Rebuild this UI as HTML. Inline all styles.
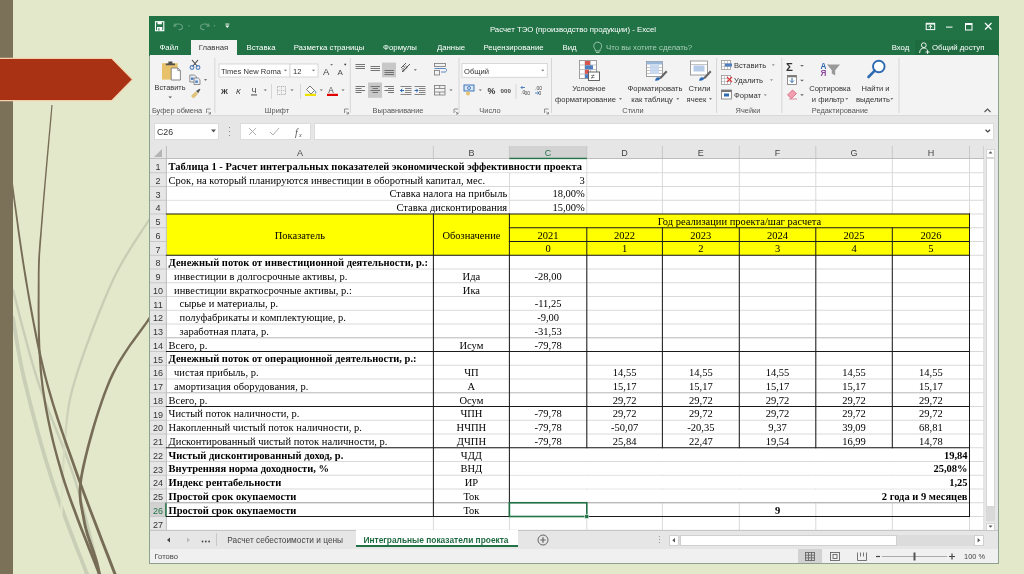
<!DOCTYPE html><html><head><meta charset="utf-8"><style>html,body{margin:0;padding:0;}body{width:1024px;height:574px;position:relative;overflow:hidden;background:#e3e8cb;}</style></head><body><div style="position:absolute;left:0;top:0;width:1024px;height:574px;will-change:transform"><svg style="position:absolute;left:0;top:0" width="1024" height="574"><defs><linearGradient id="fadeC" gradientUnits="userSpaceOnUse" x1="0" y1="220" x2="0" y2="520"><stop offset="0" stop-color="#c7cdb3"/><stop offset="0.6" stop-color="#c9cfb6"/><stop offset="1" stop-color="#e3e8cb"/></linearGradient></defs><g fill="none" stroke-linecap="round"><path d="M13.0 318.0 C14.9 328.3 17.9 353.0 24.4 380.0 C30.9 407.0 41.6 447.7 52.0 480.0 C62.4 512.3 79.8 555.7 87.0 574.0 C94.2 592.3 93.7 587.3 95.0 590.0" stroke="#c9ceb6" stroke-width="3.8"/><path d="M13.0 290.0 C17.1 305.0 27.2 348.3 37.5 380.0 C47.8 411.7 64.6 447.7 75.0 480.0 C85.4 512.3 95.8 558.3 100.0 574.0" stroke="#c8cdb5" stroke-width="2.4"/><path d="M160.0 205.0 C158.2 207.5 156.8 207.5 149.0 220.0 C141.2 232.5 125.3 253.3 113.0 280.0 C100.7 306.7 83.0 353.3 75.0 380.0 C67.0 406.7 67.3 416.7 65.0 440.0 C62.7 463.3 61.7 506.7 61.0 520.0" stroke="url(#fadeC)" stroke-width="2.3"/></g><polygon points="51.4,104.9 50.9,110.7 50.2,118.1 49.4,126.9 48.5,136.8 47.5,147.5 46.5,158.7 45.5,170.1 44.5,181.4 43.5,192.4 42.7,202.6 41.9,211.9 41.2,219.9 40.7,226.7 40.2,232.7 39.7,237.9 39.3,242.5 39.0,246.8 38.7,250.9 38.4,254.9 38.2,259.0 38.0,263.4 37.9,268.3 37.8,273.8 37.8,280.0 37.7,286.9 37.7,294.4 37.6,302.3 37.6,310.6 37.7,319.1 37.8,327.9 37.9,336.8 38.2,345.7 38.6,354.5 39.2,363.3 39.8,371.9 40.7,380.1 41.7,388.2 42.9,396.1 44.1,404.0 45.5,411.8 47.0,419.5 48.6,427.3 50.3,435.0 52.2,442.7 54.2,450.5 56.3,458.4 58.5,466.3 60.8,474.4 63.4,482.8 66.4,491.8 69.7,501.2 73.2,510.8 76.8,520.4 80.4,529.9 84.0,539.1 87.4,547.8 90.6,555.8 93.5,563.1 96.0,569.4 98.0,574.5 99.4,578.4 100.5,581.3 101.3,583.2 101.8,584.4 102.2,585.1 105.0,584.3 104.9,583.6 104.8,583.0 104.6,582.3 104.5,581.8 104.5,582.0 101.7,583.0 104.3,581.0 101.3,581.8 101.5,582.6 101.6,583.1 101.8,583.7 101.9,584.2 102.0,584.2 104.7,583.4 104.5,583.2 104.0,582.1 103.3,580.2 102.1,577.4 100.6,573.5 98.6,568.4 96.1,562.1 93.2,554.8 90.0,546.8 86.5,538.1 82.9,528.9 79.3,519.4 75.7,509.8 72.1,500.3 68.8,491.0 65.8,482.0 63.2,473.6 60.9,465.6 58.6,457.7 56.5,449.9 54.5,442.2 52.7,434.4 50.9,426.7 49.3,419.1 47.8,411.3 46.4,403.6 45.1,395.8 43.9,387.9 42.9,379.9 42.0,371.6 41.3,363.1 40.7,354.4 40.3,345.6 40.0,336.7 39.8,327.9 39.7,319.1 39.6,310.6 39.6,302.3 39.6,294.4 39.6,287.0 39.6,280.0 39.6,273.8 39.7,268.3 39.8,263.5 40.0,259.1 40.1,255.0 40.4,251.0 40.7,246.9 41.0,242.7 41.4,238.0 41.8,232.8 42.2,226.9 42.8,220.1 43.4,212.0 44.1,202.7 45.0,192.5 45.9,181.5 46.9,170.2 47.9,158.8 48.9,147.6 49.8,136.9 50.7,127.0 51.5,118.2 52.1,110.8 52.6,105.1" fill="#776c55"/><polygon points="10.2,175.1 10.9,180.2 11.7,186.6 12.7,194.1 13.8,202.5 15.1,211.7 16.4,221.4 17.7,231.4 19.1,241.6 20.6,251.8 22.1,261.7 23.6,271.2 25.0,280.2 26.5,288.7 27.9,297.2 29.4,305.7 30.9,314.1 32.5,322.5 34.1,330.9 35.7,339.2 37.4,347.5 39.2,355.8 41.1,364.0 43.0,372.2 45.1,380.3 47.2,388.3 49.5,396.3 51.8,404.1 54.3,411.9 56.7,419.7 59.3,427.4 61.9,435.1 64.6,442.9 67.3,450.7 70.1,458.5 72.9,466.4 75.7,474.5 78.8,482.9 82.0,491.9 85.5,501.3 89.1,510.9 92.8,520.5 96.4,530.0 99.9,539.2 103.3,547.9 106.4,556.0 109.2,563.2 111.6,569.5 113.6,574.6 115.1,578.4 116.1,581.1 116.8,582.9 117.3,583.9 118.3,585.0 120.5,583.0 120.3,582.3 120.1,581.5 119.9,580.7 119.7,580.0 119.6,579.7 118.5,581.6 117.5,578.4 116.3,580.3 116.5,580.9 116.7,581.6 116.9,582.4 117.2,583.1 117.3,583.5 119.4,582.0 120.1,582.5 119.7,581.6 119.0,579.9 117.9,577.2 116.4,573.4 114.4,568.4 112.0,562.2 109.2,554.9 106.0,546.9 102.6,538.2 99.1,529.0 95.4,519.5 91.7,509.9 88.1,500.3 84.6,490.9 81.3,482.0 78.3,473.5 75.4,465.5 72.6,457.6 69.8,449.8 67.0,442.0 64.3,434.3 61.7,426.6 59.1,418.9 56.6,411.2 54.1,403.4 51.8,395.6 49.5,387.7 47.3,379.7 45.2,371.6 43.3,363.5 41.4,355.3 39.6,347.1 37.8,338.8 36.2,330.5 34.5,322.1 33.0,313.7 31.4,305.3 29.9,296.9 28.4,288.4 27.0,279.8 25.5,270.9 24.0,261.4 22.5,251.5 21.0,241.4 19.5,231.2 18.1,221.1 16.8,211.4 15.5,202.3 14.4,193.9 13.4,186.4 12.5,180.0 11.8,174.9" fill="#776c55"/><polygon points="169.1,289.3 168.2,290.6 167.0,292.1 165.8,293.8 164.3,295.7 162.7,297.7 161.0,300.0 159.2,302.5 157.2,305.2 155.1,308.1 152.8,311.3 150.5,314.7 148.0,318.3 145.4,322.2 142.4,326.2 139.3,330.5 136.0,335.0 132.5,339.8 128.9,344.7 125.4,349.9 121.8,355.4 118.3,361.0 115.0,367.0 111.8,373.1 108.8,379.5 106.0,386.4 103.1,393.9 100.3,401.9 97.5,410.3 94.7,418.9 92.1,427.6 89.6,436.2 87.3,444.7 85.3,452.8 83.4,460.4 81.8,467.5 80.6,473.8 79.6,479.3 79.0,484.4 78.7,489.0 78.6,493.1 78.8,497.0 79.1,500.5 79.5,503.9 80.1,507.1 80.7,510.3 81.3,513.5 82.0,516.8 82.6,520.3 83.3,523.9 84.1,527.6 85.1,531.2 86.1,534.9 87.3,538.5 88.4,542.0 89.6,545.4 90.7,548.7 91.8,551.9 92.9,554.9 93.8,557.8 94.5,560.4 95.2,562.9 95.8,565.3 96.4,567.6 96.9,569.8 97.3,571.9 97.7,573.8 98.1,575.6 98.4,577.3 98.7,578.8 99.0,580.1 99.2,581.3 99.4,582.3 102.6,581.7 102.3,580.7 102.1,579.5 101.8,578.2 101.5,576.7 101.2,575.0 100.8,573.2 100.3,571.2 99.9,569.1 99.4,566.9 98.8,564.6 98.2,562.1 97.5,559.6 96.7,556.9 95.7,554.0 94.7,550.9 93.6,547.7 92.4,544.4 91.2,541.0 90.0,537.5 88.9,534.0 87.9,530.5 86.9,526.9 86.1,523.3 85.4,519.7 84.8,516.3 84.1,513.0 83.5,509.8 82.8,506.6 82.3,503.5 81.8,500.2 81.5,496.8 81.4,493.1 81.4,489.1 81.7,484.6 82.3,479.7 83.2,474.2 84.5,468.0 86.0,461.0 87.8,453.4 89.9,445.3 92.2,436.9 94.6,428.3 97.2,419.6 99.9,411.1 102.7,402.7 105.5,394.8 108.4,387.3 111.2,380.5 114.1,374.2 117.2,368.1 120.5,362.3 123.9,356.7 127.4,351.3 130.9,346.1 134.5,341.2 137.9,336.5 141.2,331.9 144.4,327.6 147.3,323.5 150.0,319.7 152.4,316.0 154.7,312.6 157.0,309.5 159.0,306.6 161.0,303.9 162.9,301.4 164.6,299.1 166.1,297.0 167.5,295.1 168.8,293.5 169.9,292.0 170.9,290.7" fill="#776c55"/></svg><div style="position:absolute;left:0px;top:0px;width:13px;height:574px;background:#7b7058;"></div><svg style="position:absolute;left:0;top:0" width="140" height="110"><polygon points="-2,58.4 111.7,58.4 132.5,79.5 111.7,100.6 -2,100.6" fill="#a83213" stroke="#f2d0ab" stroke-width="1.1"/></svg><div style="position:absolute;left:149px;top:16px;width:850px;height:548px;background:#fff;border:1px solid #8ca28f;box-sizing:border-box;"></div><div style="position:absolute;left:149px;top:16px;width:850px;height:40px;background:#217346;"></div><div style="position:absolute;left:150px;top:55px;width:848px;height:508px;background:#e6e6e6;"></div><div style="position:absolute;left:150px;top:55px;width:848px;height:60px;background:#f3f3f3;border-bottom:1px solid #dadada;"></div><div style="position:absolute;left:191px;top:40px;width:46px;height:16px;background:#f3f3f3;"></div><div style="position:absolute;left:73px;width:1000px;text-align:center;top:24.94px;font-family:'Liberation Sans', sans-serif;font-size:7.8px;font-weight:normal;color:#fff;white-space:pre;line-height:normal;">Расчет ТЭО (производство продукции) - Excel</div><div style="position:absolute;left:-331px;width:1000px;text-align:center;top:43.44px;font-family:'Liberation Sans', sans-serif;font-size:7.8px;font-weight:normal;color:#fff;white-space:pre;line-height:normal;">Файл</div><div style="position:absolute;left:-286.5px;width:1000px;text-align:center;top:43.44px;font-family:'Liberation Sans', sans-serif;font-size:7.8px;font-weight:normal;color:#3a3a3a;white-space:pre;line-height:normal;">Главная</div><div style="position:absolute;left:-239px;width:1000px;text-align:center;top:43.44px;font-family:'Liberation Sans', sans-serif;font-size:7.8px;font-weight:normal;color:#fff;white-space:pre;line-height:normal;">Вставка</div><div style="position:absolute;left:-171px;width:1000px;text-align:center;top:43.44px;font-family:'Liberation Sans', sans-serif;font-size:7.8px;font-weight:normal;color:#fff;white-space:pre;line-height:normal;">Разметка страницы</div><div style="position:absolute;left:-100px;width:1000px;text-align:center;top:43.44px;font-family:'Liberation Sans', sans-serif;font-size:7.8px;font-weight:normal;color:#fff;white-space:pre;line-height:normal;">Формулы</div><div style="position:absolute;left:-49px;width:1000px;text-align:center;top:43.44px;font-family:'Liberation Sans', sans-serif;font-size:7.8px;font-weight:normal;color:#fff;white-space:pre;line-height:normal;">Данные</div><div style="position:absolute;left:13.5px;width:1000px;text-align:center;top:43.44px;font-family:'Liberation Sans', sans-serif;font-size:7.8px;font-weight:normal;color:#fff;white-space:pre;line-height:normal;">Рецензирование</div><div style="position:absolute;left:69.5px;width:1000px;text-align:center;top:43.44px;font-family:'Liberation Sans', sans-serif;font-size:7.8px;font-weight:normal;color:#fff;white-space:pre;line-height:normal;">Вид</div><div style="position:absolute;left:606px;top:43.44px;font-family:'Liberation Sans', sans-serif;font-size:7.8px;font-weight:normal;color:#a9d0b8;white-space:pre;line-height:normal;">Что вы хотите сделать?</div><svg style="position:absolute;left:592px;top:41px" width="12" height="14"><path d="M3.3 8.5 C1.8 7 1.8 5.5 1.8 4.8 C1.8 2.6 3.6 1.2 5.7 1.2 C7.8 1.2 9.6 2.6 9.6 4.8 C9.6 5.5 9.6 7 8.1 8.5 V10 H3.3 Z M4 11.5 H7.4" fill="none" stroke="#a9d0b8" stroke-width="0.9"/></svg><div style="position:absolute;left:400.5px;width:1000px;text-align:center;top:43.44px;font-family:'Liberation Sans', sans-serif;font-size:7.8px;font-weight:normal;color:#fff;white-space:pre;line-height:normal;">Вход</div><div style="position:absolute;left:915px;top:40px;width:83px;height:15px;background:#1e6b40;"></div><div style="position:absolute;left:932px;top:43.44px;font-family:'Liberation Sans', sans-serif;font-size:7.8px;font-weight:normal;color:#fff;white-space:pre;line-height:normal;">Общий доступ</div><div style="position:absolute;left:150px;top:116px;width:848px;height:30px;background:#e6e6e6;"></div><div style="position:absolute;left:153.5px;top:123px;width:65.5px;height:16.5px;background:#fff;border:1px solid #dcdcdc;box-sizing:border-box;"></div><div style="position:absolute;left:157px;top:127.04px;font-family:'Liberation Sans', sans-serif;font-size:8.8px;font-weight:normal;color:#333;white-space:pre;line-height:normal;">C26</div><svg style="position:absolute;left:210px;top:128px" width="8" height="6"><polygon points="1,1.5 6,1.5 3.5,4.5" fill="#555"/></svg><div style="position:absolute;left:228.5px;top:127px;width:1.2px;height:1.2px;background:#888;"></div><div style="position:absolute;left:228.5px;top:131px;width:1.2px;height:1.2px;background:#888;"></div><div style="position:absolute;left:228.5px;top:135px;width:1.2px;height:1.2px;background:#888;"></div><div style="position:absolute;left:239.5px;top:123px;width:71.5px;height:16.5px;background:#fff;border:1px solid #dcdcdc;box-sizing:border-box;"></div><svg style="position:absolute;left:239px;top:123px" width="72" height="17"><g stroke="#b0b0b0" stroke-width="1" fill="none"><path d="M10 5 L17 12 M17 5 L10 12"/><path d="M31 9 L34 12 L40 5"/></g><text x="56" y="13" font-family="Liberation Serif" font-style="italic" font-size="10" fill="#555">f</text><text x="60" y="13.5" font-family="Liberation Serif" font-style="italic" font-size="6" fill="#555">x</text></svg><div style="position:absolute;left:313.5px;top:123px;width:680px;height:16.5px;background:#fff;border:1px solid #dcdcdc;box-sizing:border-box;"></div><svg style="position:absolute;left:983px;top:127px" width="10" height="8"><path d="M2.5 2.8 L4.8 5 L7.1 2.8" stroke="#444" stroke-width="1.2" fill="none"/></svg><div style="position:absolute;left:150px;top:146px;width:833.8px;height:384.25px;background:#fff;"></div><div style="position:absolute;left:150px;top:146px;width:833.8px;height:13px;background:#e6e6e6;"></div><div style="position:absolute;left:150px;top:146px;width:16.400000000000006px;height:384.25px;background:#e6e6e6;"></div><div style="position:absolute;left:509.4px;top:146px;width:77.39999999999998px;height:13px;background:#d2d2d2;"></div><div style="position:absolute;left:150px;top:502.75px;width:16.400000000000006px;height:13.75px;background:#d2d2d2;"></div><svg style="position:absolute;left:0;top:0" width="1024" height="574"><line x1="166.40" y1="172.75" x2="983.80" y2="172.75" stroke="#d9d9d9" stroke-width="1"/><line x1="166.40" y1="186.50" x2="983.80" y2="186.50" stroke="#d9d9d9" stroke-width="1"/><line x1="166.40" y1="200.25" x2="983.80" y2="200.25" stroke="#d9d9d9" stroke-width="1"/><line x1="166.40" y1="214.00" x2="983.80" y2="214.00" stroke="#d9d9d9" stroke-width="1"/><line x1="166.40" y1="227.75" x2="983.80" y2="227.75" stroke="#d9d9d9" stroke-width="1"/><line x1="166.40" y1="241.50" x2="983.80" y2="241.50" stroke="#d9d9d9" stroke-width="1"/><line x1="166.40" y1="255.25" x2="983.80" y2="255.25" stroke="#d9d9d9" stroke-width="1"/><line x1="166.40" y1="269.00" x2="983.80" y2="269.00" stroke="#d9d9d9" stroke-width="1"/><line x1="166.40" y1="282.75" x2="983.80" y2="282.75" stroke="#d9d9d9" stroke-width="1"/><line x1="166.40" y1="296.50" x2="983.80" y2="296.50" stroke="#d9d9d9" stroke-width="1"/><line x1="166.40" y1="310.25" x2="983.80" y2="310.25" stroke="#d9d9d9" stroke-width="1"/><line x1="166.40" y1="324.00" x2="983.80" y2="324.00" stroke="#d9d9d9" stroke-width="1"/><line x1="166.40" y1="337.75" x2="983.80" y2="337.75" stroke="#d9d9d9" stroke-width="1"/><line x1="166.40" y1="351.50" x2="983.80" y2="351.50" stroke="#d9d9d9" stroke-width="1"/><line x1="166.40" y1="365.25" x2="983.80" y2="365.25" stroke="#d9d9d9" stroke-width="1"/><line x1="166.40" y1="379.00" x2="983.80" y2="379.00" stroke="#d9d9d9" stroke-width="1"/><line x1="166.40" y1="392.75" x2="983.80" y2="392.75" stroke="#d9d9d9" stroke-width="1"/><line x1="166.40" y1="406.50" x2="983.80" y2="406.50" stroke="#d9d9d9" stroke-width="1"/><line x1="166.40" y1="420.25" x2="983.80" y2="420.25" stroke="#d9d9d9" stroke-width="1"/><line x1="166.40" y1="434.00" x2="983.80" y2="434.00" stroke="#d9d9d9" stroke-width="1"/><line x1="166.40" y1="447.75" x2="983.80" y2="447.75" stroke="#d9d9d9" stroke-width="1"/><line x1="166.40" y1="461.50" x2="983.80" y2="461.50" stroke="#d9d9d9" stroke-width="1"/><line x1="166.40" y1="475.25" x2="983.80" y2="475.25" stroke="#d9d9d9" stroke-width="1"/><line x1="166.40" y1="489.00" x2="983.80" y2="489.00" stroke="#d9d9d9" stroke-width="1"/><line x1="166.40" y1="502.75" x2="983.80" y2="502.75" stroke="#d9d9d9" stroke-width="1"/><line x1="166.40" y1="516.50" x2="983.80" y2="516.50" stroke="#d9d9d9" stroke-width="1"/><line x1="166.40" y1="530.25" x2="983.80" y2="530.25" stroke="#d9d9d9" stroke-width="1"/><line x1="433.40" y1="159.00" x2="433.40" y2="530.25" stroke="#d9d9d9" stroke-width="1"/><line x1="509.40" y1="159.00" x2="509.40" y2="530.25" stroke="#d9d9d9" stroke-width="1"/><line x1="586.80" y1="159.00" x2="586.80" y2="530.25" stroke="#d9d9d9" stroke-width="1"/><line x1="662.40" y1="159.00" x2="662.40" y2="530.25" stroke="#d9d9d9" stroke-width="1"/><line x1="739.30" y1="159.00" x2="739.30" y2="530.25" stroke="#d9d9d9" stroke-width="1"/><line x1="815.80" y1="159.00" x2="815.80" y2="530.25" stroke="#d9d9d9" stroke-width="1"/><line x1="892.30" y1="159.00" x2="892.30" y2="530.25" stroke="#d9d9d9" stroke-width="1"/><line x1="969.50" y1="159.00" x2="969.50" y2="530.25" stroke="#d9d9d9" stroke-width="1"/><line x1="983.80" y1="159.00" x2="983.80" y2="530.25" stroke="#d9d9d9" stroke-width="1"/><line x1="433.40" y1="146.00" x2="433.40" y2="159.00" stroke="#c8c8c8" stroke-width="1"/><line x1="509.40" y1="146.00" x2="509.40" y2="159.00" stroke="#c8c8c8" stroke-width="1"/><line x1="586.80" y1="146.00" x2="586.80" y2="159.00" stroke="#c8c8c8" stroke-width="1"/><line x1="662.40" y1="146.00" x2="662.40" y2="159.00" stroke="#c8c8c8" stroke-width="1"/><line x1="739.30" y1="146.00" x2="739.30" y2="159.00" stroke="#c8c8c8" stroke-width="1"/><line x1="815.80" y1="146.00" x2="815.80" y2="159.00" stroke="#c8c8c8" stroke-width="1"/><line x1="892.30" y1="146.00" x2="892.30" y2="159.00" stroke="#c8c8c8" stroke-width="1"/><line x1="969.50" y1="146.00" x2="969.50" y2="159.00" stroke="#c8c8c8" stroke-width="1"/><line x1="983.80" y1="146.00" x2="983.80" y2="159.00" stroke="#c8c8c8" stroke-width="1"/><line x1="150.00" y1="172.75" x2="166.40" y2="172.75" stroke="#c8c8c8" stroke-width="1"/><line x1="150.00" y1="186.50" x2="166.40" y2="186.50" stroke="#c8c8c8" stroke-width="1"/><line x1="150.00" y1="200.25" x2="166.40" y2="200.25" stroke="#c8c8c8" stroke-width="1"/><line x1="150.00" y1="214.00" x2="166.40" y2="214.00" stroke="#c8c8c8" stroke-width="1"/><line x1="150.00" y1="227.75" x2="166.40" y2="227.75" stroke="#c8c8c8" stroke-width="1"/><line x1="150.00" y1="241.50" x2="166.40" y2="241.50" stroke="#c8c8c8" stroke-width="1"/><line x1="150.00" y1="255.25" x2="166.40" y2="255.25" stroke="#c8c8c8" stroke-width="1"/><line x1="150.00" y1="269.00" x2="166.40" y2="269.00" stroke="#c8c8c8" stroke-width="1"/><line x1="150.00" y1="282.75" x2="166.40" y2="282.75" stroke="#c8c8c8" stroke-width="1"/><line x1="150.00" y1="296.50" x2="166.40" y2="296.50" stroke="#c8c8c8" stroke-width="1"/><line x1="150.00" y1="310.25" x2="166.40" y2="310.25" stroke="#c8c8c8" stroke-width="1"/><line x1="150.00" y1="324.00" x2="166.40" y2="324.00" stroke="#c8c8c8" stroke-width="1"/><line x1="150.00" y1="337.75" x2="166.40" y2="337.75" stroke="#c8c8c8" stroke-width="1"/><line x1="150.00" y1="351.50" x2="166.40" y2="351.50" stroke="#c8c8c8" stroke-width="1"/><line x1="150.00" y1="365.25" x2="166.40" y2="365.25" stroke="#c8c8c8" stroke-width="1"/><line x1="150.00" y1="379.00" x2="166.40" y2="379.00" stroke="#c8c8c8" stroke-width="1"/><line x1="150.00" y1="392.75" x2="166.40" y2="392.75" stroke="#c8c8c8" stroke-width="1"/><line x1="150.00" y1="406.50" x2="166.40" y2="406.50" stroke="#c8c8c8" stroke-width="1"/><line x1="150.00" y1="420.25" x2="166.40" y2="420.25" stroke="#c8c8c8" stroke-width="1"/><line x1="150.00" y1="434.00" x2="166.40" y2="434.00" stroke="#c8c8c8" stroke-width="1"/><line x1="150.00" y1="447.75" x2="166.40" y2="447.75" stroke="#c8c8c8" stroke-width="1"/><line x1="150.00" y1="461.50" x2="166.40" y2="461.50" stroke="#c8c8c8" stroke-width="1"/><line x1="150.00" y1="475.25" x2="166.40" y2="475.25" stroke="#c8c8c8" stroke-width="1"/><line x1="150.00" y1="489.00" x2="166.40" y2="489.00" stroke="#c8c8c8" stroke-width="1"/><line x1="150.00" y1="502.75" x2="166.40" y2="502.75" stroke="#c8c8c8" stroke-width="1"/><line x1="150.00" y1="516.50" x2="166.40" y2="516.50" stroke="#c8c8c8" stroke-width="1"/><line x1="150.00" y1="530.25" x2="166.40" y2="530.25" stroke="#c8c8c8" stroke-width="1"/><line x1="150.00" y1="158.50" x2="983.80" y2="158.50" stroke="#bdbdbd" stroke-width="1"/><line x1="166.40" y1="146.00" x2="166.40" y2="530.25" stroke="#bdbdbd" stroke-width="1"/><line x1="509.40" y1="158.50" x2="586.80" y2="158.50" stroke="#217346" stroke-width="1.5"/><line x1="165.90" y1="502.75" x2="165.90" y2="516.50" stroke="#217346" stroke-width="1.5"/><rect x="167.00" y="159.60" width="419.20" height="12.55" fill="#fff"/><rect x="167.00" y="173.35" width="341.80" height="12.55" fill="#fff"/><rect x="167.00" y="187.10" width="341.80" height="12.55" fill="#fff"/><rect x="167.00" y="200.85" width="341.80" height="12.55" fill="#fff"/><rect x="166.90" y="214.00" width="802.10" height="41.25" fill="#ffff00"/><rect x="510.00" y="448.35" width="458.90" height="12.55" fill="#fff"/><rect x="510.00" y="462.10" width="458.90" height="12.55" fill="#fff"/><rect x="510.00" y="475.85" width="458.90" height="12.55" fill="#fff"/><rect x="510.00" y="489.60" width="458.90" height="12.55" fill="#fff"/><line x1="165.90" y1="214.00" x2="970.00" y2="214.00" stroke="#1a1a1a" stroke-width="1"/><line x1="508.90" y1="227.75" x2="970.00" y2="227.75" stroke="#1a1a1a" stroke-width="1"/><line x1="508.90" y1="241.50" x2="970.00" y2="241.50" stroke="#1a1a1a" stroke-width="1"/><line x1="165.90" y1="255.25" x2="970.00" y2="255.25" stroke="#1a1a1a" stroke-width="1"/><line x1="165.90" y1="337.75" x2="970.00" y2="337.75" stroke="#c4c4c4" stroke-width="1"/><line x1="165.90" y1="351.50" x2="970.00" y2="351.50" stroke="#1a1a1a" stroke-width="1"/><line x1="165.90" y1="392.75" x2="970.00" y2="392.75" stroke="#c4c4c4" stroke-width="1"/><line x1="165.90" y1="406.50" x2="970.00" y2="406.50" stroke="#1a1a1a" stroke-width="1"/><line x1="165.90" y1="447.75" x2="970.00" y2="447.75" stroke="#1a1a1a" stroke-width="1"/><line x1="165.90" y1="502.75" x2="970.00" y2="502.75" stroke="#aaaaaa" stroke-width="1"/><line x1="165.90" y1="516.50" x2="970.00" y2="516.50" stroke="#1a1a1a" stroke-width="1"/><line x1="433.40" y1="213.50" x2="433.40" y2="517.00" stroke="#1a1a1a" stroke-width="1"/><line x1="509.40" y1="213.50" x2="509.40" y2="517.00" stroke="#1a1a1a" stroke-width="1"/><line x1="969.50" y1="213.50" x2="969.50" y2="517.00" stroke="#1a1a1a" stroke-width="1"/><line x1="586.80" y1="227.25" x2="586.80" y2="448.25" stroke="#1a1a1a" stroke-width="1"/><line x1="662.40" y1="227.25" x2="662.40" y2="448.25" stroke="#1a1a1a" stroke-width="1"/><line x1="739.30" y1="227.25" x2="739.30" y2="448.25" stroke="#1a1a1a" stroke-width="1"/><line x1="815.80" y1="227.25" x2="815.80" y2="448.25" stroke="#1a1a1a" stroke-width="1"/><line x1="892.30" y1="227.25" x2="892.30" y2="448.25" stroke="#1a1a1a" stroke-width="1"/><rect x="509.40" y="502.75" width="77.40" height="13.75" fill="none" stroke="#217346" stroke-width="1.6"/><rect x="584.80" y="514.50" width="4" height="4" fill="#217346" stroke="#fff" stroke-width="0.6"/></svg><div style="position:absolute;left:-200.10000000000002px;width:1000px;text-align:center;top:148.16px;font-family:'Liberation Sans', sans-serif;font-size:9px;font-weight:normal;color:#444;white-space:pre;line-height:normal;">A</div><div style="position:absolute;left:-28.600000000000023px;width:1000px;text-align:center;top:148.16px;font-family:'Liberation Sans', sans-serif;font-size:9px;font-weight:normal;color:#444;white-space:pre;line-height:normal;">B</div><div style="position:absolute;left:48.09999999999991px;width:1000px;text-align:center;top:148.16px;font-family:'Liberation Sans', sans-serif;font-size:9px;font-weight:normal;color:#217346;white-space:pre;line-height:normal;">C</div><div style="position:absolute;left:124.59999999999991px;width:1000px;text-align:center;top:148.16px;font-family:'Liberation Sans', sans-serif;font-size:9px;font-weight:normal;color:#444;white-space:pre;line-height:normal;">D</div><div style="position:absolute;left:200.8499999999999px;width:1000px;text-align:center;top:148.16px;font-family:'Liberation Sans', sans-serif;font-size:9px;font-weight:normal;color:#444;white-space:pre;line-height:normal;">E</div><div style="position:absolute;left:277.54999999999995px;width:1000px;text-align:center;top:148.16px;font-family:'Liberation Sans', sans-serif;font-size:9px;font-weight:normal;color:#444;white-space:pre;line-height:normal;">F</div><div style="position:absolute;left:354.04999999999995px;width:1000px;text-align:center;top:148.16px;font-family:'Liberation Sans', sans-serif;font-size:9px;font-weight:normal;color:#444;white-space:pre;line-height:normal;">G</div><div style="position:absolute;left:430.9px;width:1000px;text-align:center;top:148.16px;font-family:'Liberation Sans', sans-serif;font-size:9px;font-weight:normal;color:#444;white-space:pre;line-height:normal;">H</div><svg style="position:absolute;left:150px;top:146px" width="16" height="13"><polygon points="12,3 12,11 4,11" fill="#b4b4b4"/></svg><div style="position:absolute;left:-342.0px;width:1000px;text-align:center;top:162.16px;font-family:'Liberation Sans', sans-serif;font-size:9px;font-weight:normal;color:#333;white-space:pre;line-height:normal;">1</div><div style="position:absolute;left:-342.0px;width:1000px;text-align:center;top:175.91px;font-family:'Liberation Sans', sans-serif;font-size:9px;font-weight:normal;color:#333;white-space:pre;line-height:normal;">2</div><div style="position:absolute;left:-342.0px;width:1000px;text-align:center;top:189.66px;font-family:'Liberation Sans', sans-serif;font-size:9px;font-weight:normal;color:#333;white-space:pre;line-height:normal;">3</div><div style="position:absolute;left:-342.0px;width:1000px;text-align:center;top:203.41px;font-family:'Liberation Sans', sans-serif;font-size:9px;font-weight:normal;color:#333;white-space:pre;line-height:normal;">4</div><div style="position:absolute;left:-342.0px;width:1000px;text-align:center;top:217.16px;font-family:'Liberation Sans', sans-serif;font-size:9px;font-weight:normal;color:#333;white-space:pre;line-height:normal;">5</div><div style="position:absolute;left:-342.0px;width:1000px;text-align:center;top:230.91px;font-family:'Liberation Sans', sans-serif;font-size:9px;font-weight:normal;color:#333;white-space:pre;line-height:normal;">6</div><div style="position:absolute;left:-342.0px;width:1000px;text-align:center;top:244.66px;font-family:'Liberation Sans', sans-serif;font-size:9px;font-weight:normal;color:#333;white-space:pre;line-height:normal;">7</div><div style="position:absolute;left:-342.0px;width:1000px;text-align:center;top:258.41px;font-family:'Liberation Sans', sans-serif;font-size:9px;font-weight:normal;color:#333;white-space:pre;line-height:normal;">8</div><div style="position:absolute;left:-342.0px;width:1000px;text-align:center;top:272.16px;font-family:'Liberation Sans', sans-serif;font-size:9px;font-weight:normal;color:#333;white-space:pre;line-height:normal;">9</div><div style="position:absolute;left:-342.0px;width:1000px;text-align:center;top:285.91px;font-family:'Liberation Sans', sans-serif;font-size:9px;font-weight:normal;color:#333;white-space:pre;line-height:normal;">10</div><div style="position:absolute;left:-342.0px;width:1000px;text-align:center;top:299.66px;font-family:'Liberation Sans', sans-serif;font-size:9px;font-weight:normal;color:#333;white-space:pre;line-height:normal;">11</div><div style="position:absolute;left:-342.0px;width:1000px;text-align:center;top:313.41px;font-family:'Liberation Sans', sans-serif;font-size:9px;font-weight:normal;color:#333;white-space:pre;line-height:normal;">12</div><div style="position:absolute;left:-342.0px;width:1000px;text-align:center;top:327.16px;font-family:'Liberation Sans', sans-serif;font-size:9px;font-weight:normal;color:#333;white-space:pre;line-height:normal;">13</div><div style="position:absolute;left:-342.0px;width:1000px;text-align:center;top:340.91px;font-family:'Liberation Sans', sans-serif;font-size:9px;font-weight:normal;color:#333;white-space:pre;line-height:normal;">14</div><div style="position:absolute;left:-342.0px;width:1000px;text-align:center;top:354.66px;font-family:'Liberation Sans', sans-serif;font-size:9px;font-weight:normal;color:#333;white-space:pre;line-height:normal;">15</div><div style="position:absolute;left:-342.0px;width:1000px;text-align:center;top:368.41px;font-family:'Liberation Sans', sans-serif;font-size:9px;font-weight:normal;color:#333;white-space:pre;line-height:normal;">16</div><div style="position:absolute;left:-342.0px;width:1000px;text-align:center;top:382.16px;font-family:'Liberation Sans', sans-serif;font-size:9px;font-weight:normal;color:#333;white-space:pre;line-height:normal;">17</div><div style="position:absolute;left:-342.0px;width:1000px;text-align:center;top:395.91px;font-family:'Liberation Sans', sans-serif;font-size:9px;font-weight:normal;color:#333;white-space:pre;line-height:normal;">18</div><div style="position:absolute;left:-342.0px;width:1000px;text-align:center;top:409.66px;font-family:'Liberation Sans', sans-serif;font-size:9px;font-weight:normal;color:#333;white-space:pre;line-height:normal;">19</div><div style="position:absolute;left:-342.0px;width:1000px;text-align:center;top:423.41px;font-family:'Liberation Sans', sans-serif;font-size:9px;font-weight:normal;color:#333;white-space:pre;line-height:normal;">20</div><div style="position:absolute;left:-342.0px;width:1000px;text-align:center;top:437.16px;font-family:'Liberation Sans', sans-serif;font-size:9px;font-weight:normal;color:#333;white-space:pre;line-height:normal;">21</div><div style="position:absolute;left:-342.0px;width:1000px;text-align:center;top:450.91px;font-family:'Liberation Sans', sans-serif;font-size:9px;font-weight:normal;color:#333;white-space:pre;line-height:normal;">22</div><div style="position:absolute;left:-342.0px;width:1000px;text-align:center;top:464.66px;font-family:'Liberation Sans', sans-serif;font-size:9px;font-weight:normal;color:#333;white-space:pre;line-height:normal;">23</div><div style="position:absolute;left:-342.0px;width:1000px;text-align:center;top:478.41px;font-family:'Liberation Sans', sans-serif;font-size:9px;font-weight:normal;color:#333;white-space:pre;line-height:normal;">24</div><div style="position:absolute;left:-342.0px;width:1000px;text-align:center;top:492.16px;font-family:'Liberation Sans', sans-serif;font-size:9px;font-weight:normal;color:#333;white-space:pre;line-height:normal;">25</div><div style="position:absolute;left:-342.0px;width:1000px;text-align:center;top:505.90px;font-family:'Liberation Sans', sans-serif;font-size:9px;font-weight:normal;color:#217346;white-space:pre;line-height:normal;">26</div><div style="position:absolute;left:-342.0px;width:1000px;text-align:center;top:519.65px;font-family:'Liberation Sans', sans-serif;font-size:9px;font-weight:normal;color:#333;white-space:pre;line-height:normal;">27</div><div style="position:absolute;left:168.6px;top:160.89px;font-family:'Liberation Serif', serif;font-size:10.5px;font-weight:bold;color:#000;white-space:pre;line-height:normal;">Таблица 1 - Расчет интегральных показателей экономической эффективности проекта</div><div style="position:absolute;left:168.6px;top:174.64px;font-family:'Liberation Serif', serif;font-size:10.5px;font-weight:normal;color:#000;white-space:pre;line-height:normal;">Срок, на который планируются инвестиции в оборотный капитал, мес.</div><div style="position:absolute;left:-415.20000000000005px;width:1000px;text-align:right;top:174.64px;font-family:'Liberation Serif', serif;font-size:10.5px;font-weight:normal;color:#000;white-space:pre;line-height:normal;">3</div><div style="position:absolute;left:-492.8px;width:1000px;text-align:right;top:188.39px;font-family:'Liberation Serif', serif;font-size:10.5px;font-weight:normal;color:#000;white-space:pre;line-height:normal;">Ставка налога на прибыль</div><div style="position:absolute;left:-415.20000000000005px;width:1000px;text-align:right;top:188.39px;font-family:'Liberation Serif', serif;font-size:10.5px;font-weight:normal;color:#000;white-space:pre;line-height:normal;">18,00%</div><div style="position:absolute;left:-492.8px;width:1000px;text-align:right;top:202.14px;font-family:'Liberation Serif', serif;font-size:10.5px;font-weight:normal;color:#000;white-space:pre;line-height:normal;">Ставка дисконтирования</div><div style="position:absolute;left:-415.20000000000005px;width:1000px;text-align:right;top:202.14px;font-family:'Liberation Serif', serif;font-size:10.5px;font-weight:normal;color:#000;white-space:pre;line-height:normal;">15,00%</div><div style="position:absolute;left:-200.10000000000002px;width:1000px;text-align:center;top:229.64px;font-family:'Liberation Serif', serif;font-size:10.5px;font-weight:normal;color:#000;white-space:pre;line-height:normal;">Показатель</div><div style="position:absolute;left:-28.600000000000023px;width:1000px;text-align:center;top:229.64px;font-family:'Liberation Serif', serif;font-size:10.5px;font-weight:normal;color:#000;white-space:pre;line-height:normal;">Обозначение</div><div style="position:absolute;left:239.45000000000005px;width:1000px;text-align:center;top:215.89px;font-family:'Liberation Serif', serif;font-size:10.5px;font-weight:normal;color:#000;white-space:pre;line-height:normal;">Год реализации проекта/шаг расчета</div><div style="position:absolute;left:48.09999999999991px;width:1000px;text-align:center;top:229.64px;font-family:'Liberation Serif', serif;font-size:10.5px;font-weight:normal;color:#000;white-space:pre;line-height:normal;">2021</div><div style="position:absolute;left:48.09999999999991px;width:1000px;text-align:center;top:243.39px;font-family:'Liberation Serif', serif;font-size:10.5px;font-weight:normal;color:#000;white-space:pre;line-height:normal;">0</div><div style="position:absolute;left:124.59999999999991px;width:1000px;text-align:center;top:229.64px;font-family:'Liberation Serif', serif;font-size:10.5px;font-weight:normal;color:#000;white-space:pre;line-height:normal;">2022</div><div style="position:absolute;left:124.59999999999991px;width:1000px;text-align:center;top:243.39px;font-family:'Liberation Serif', serif;font-size:10.5px;font-weight:normal;color:#000;white-space:pre;line-height:normal;">1</div><div style="position:absolute;left:200.8499999999999px;width:1000px;text-align:center;top:229.64px;font-family:'Liberation Serif', serif;font-size:10.5px;font-weight:normal;color:#000;white-space:pre;line-height:normal;">2023</div><div style="position:absolute;left:200.8499999999999px;width:1000px;text-align:center;top:243.39px;font-family:'Liberation Serif', serif;font-size:10.5px;font-weight:normal;color:#000;white-space:pre;line-height:normal;">2</div><div style="position:absolute;left:277.54999999999995px;width:1000px;text-align:center;top:229.64px;font-family:'Liberation Serif', serif;font-size:10.5px;font-weight:normal;color:#000;white-space:pre;line-height:normal;">2024</div><div style="position:absolute;left:277.54999999999995px;width:1000px;text-align:center;top:243.39px;font-family:'Liberation Serif', serif;font-size:10.5px;font-weight:normal;color:#000;white-space:pre;line-height:normal;">3</div><div style="position:absolute;left:354.04999999999995px;width:1000px;text-align:center;top:229.64px;font-family:'Liberation Serif', serif;font-size:10.5px;font-weight:normal;color:#000;white-space:pre;line-height:normal;">2025</div><div style="position:absolute;left:354.04999999999995px;width:1000px;text-align:center;top:243.39px;font-family:'Liberation Serif', serif;font-size:10.5px;font-weight:normal;color:#000;white-space:pre;line-height:normal;">4</div><div style="position:absolute;left:430.9px;width:1000px;text-align:center;top:229.64px;font-family:'Liberation Serif', serif;font-size:10.5px;font-weight:normal;color:#000;white-space:pre;line-height:normal;">2026</div><div style="position:absolute;left:430.9px;width:1000px;text-align:center;top:243.39px;font-family:'Liberation Serif', serif;font-size:10.5px;font-weight:normal;color:#000;white-space:pre;line-height:normal;">5</div><div style="position:absolute;left:168.6px;top:257.14px;font-family:'Liberation Serif', serif;font-size:10.5px;font-weight:bold;color:#000;white-space:pre;line-height:normal;">Денежный поток от инвестиционной деятельности, р.:</div><div style="position:absolute;left:174.1px;top:270.89px;font-family:'Liberation Serif', serif;font-size:10.5px;font-weight:normal;color:#000;white-space:pre;line-height:normal;">инвестиции в долгосрочные активы, р.</div><div style="position:absolute;left:-28.600000000000023px;width:1000px;text-align:center;top:270.89px;font-family:'Liberation Serif', serif;font-size:10.5px;font-weight:normal;color:#000;white-space:pre;line-height:normal;">Ида</div><div style="position:absolute;left:48.09999999999991px;width:1000px;text-align:center;top:270.89px;font-family:'Liberation Serif', serif;font-size:10.5px;font-weight:normal;color:#000;white-space:pre;line-height:normal;">-28,00</div><div style="position:absolute;left:174.1px;top:284.64px;font-family:'Liberation Serif', serif;font-size:10.5px;font-weight:normal;color:#000;white-space:pre;line-height:normal;">инвестиции вкраткосрочные активы, р.:</div><div style="position:absolute;left:-28.600000000000023px;width:1000px;text-align:center;top:284.64px;font-family:'Liberation Serif', serif;font-size:10.5px;font-weight:normal;color:#000;white-space:pre;line-height:normal;">Ика</div><div style="position:absolute;left:179.6px;top:298.39px;font-family:'Liberation Serif', serif;font-size:10.5px;font-weight:normal;color:#000;white-space:pre;line-height:normal;">сырье и материалы, р.</div><div style="position:absolute;left:48.09999999999991px;width:1000px;text-align:center;top:298.39px;font-family:'Liberation Serif', serif;font-size:10.5px;font-weight:normal;color:#000;white-space:pre;line-height:normal;">-11,25</div><div style="position:absolute;left:179.6px;top:312.14px;font-family:'Liberation Serif', serif;font-size:10.5px;font-weight:normal;color:#000;white-space:pre;line-height:normal;">полуфабрикаты и комплектующие, р.</div><div style="position:absolute;left:48.09999999999991px;width:1000px;text-align:center;top:312.14px;font-family:'Liberation Serif', serif;font-size:10.5px;font-weight:normal;color:#000;white-space:pre;line-height:normal;">-9,00</div><div style="position:absolute;left:179.6px;top:325.89px;font-family:'Liberation Serif', serif;font-size:10.5px;font-weight:normal;color:#000;white-space:pre;line-height:normal;">заработная плата, р.</div><div style="position:absolute;left:48.09999999999991px;width:1000px;text-align:center;top:325.89px;font-family:'Liberation Serif', serif;font-size:10.5px;font-weight:normal;color:#000;white-space:pre;line-height:normal;">-31,53</div><div style="position:absolute;left:168.6px;top:339.64px;font-family:'Liberation Serif', serif;font-size:10.5px;font-weight:normal;color:#000;white-space:pre;line-height:normal;">Всего, р.</div><div style="position:absolute;left:-28.600000000000023px;width:1000px;text-align:center;top:339.64px;font-family:'Liberation Serif', serif;font-size:10.5px;font-weight:normal;color:#000;white-space:pre;line-height:normal;">Исум</div><div style="position:absolute;left:48.09999999999991px;width:1000px;text-align:center;top:339.64px;font-family:'Liberation Serif', serif;font-size:10.5px;font-weight:normal;color:#000;white-space:pre;line-height:normal;">-79,78</div><div style="position:absolute;left:168.6px;top:353.39px;font-family:'Liberation Serif', serif;font-size:10.5px;font-weight:bold;color:#000;white-space:pre;line-height:normal;">Денежный поток от операционной деятельности, р.:</div><div style="position:absolute;left:174.1px;top:367.14px;font-family:'Liberation Serif', serif;font-size:10.5px;font-weight:normal;color:#000;white-space:pre;line-height:normal;">чистая прибыль, р.</div><div style="position:absolute;left:-28.600000000000023px;width:1000px;text-align:center;top:367.14px;font-family:'Liberation Serif', serif;font-size:10.5px;font-weight:normal;color:#000;white-space:pre;line-height:normal;">ЧП</div><div style="position:absolute;left:174.1px;top:380.89px;font-family:'Liberation Serif', serif;font-size:10.5px;font-weight:normal;color:#000;white-space:pre;line-height:normal;">амортизация оборудования, р.</div><div style="position:absolute;left:-28.600000000000023px;width:1000px;text-align:center;top:380.89px;font-family:'Liberation Serif', serif;font-size:10.5px;font-weight:normal;color:#000;white-space:pre;line-height:normal;">А</div><div style="position:absolute;left:168.6px;top:394.64px;font-family:'Liberation Serif', serif;font-size:10.5px;font-weight:normal;color:#000;white-space:pre;line-height:normal;">Всего, р.</div><div style="position:absolute;left:-28.600000000000023px;width:1000px;text-align:center;top:394.64px;font-family:'Liberation Serif', serif;font-size:10.5px;font-weight:normal;color:#000;white-space:pre;line-height:normal;">Осум</div><div style="position:absolute;left:124.59999999999991px;width:1000px;text-align:center;top:367.14px;font-family:'Liberation Serif', serif;font-size:10.5px;font-weight:normal;color:#000;white-space:pre;line-height:normal;">14,55</div><div style="position:absolute;left:124.59999999999991px;width:1000px;text-align:center;top:380.89px;font-family:'Liberation Serif', serif;font-size:10.5px;font-weight:normal;color:#000;white-space:pre;line-height:normal;">15,17</div><div style="position:absolute;left:124.59999999999991px;width:1000px;text-align:center;top:394.64px;font-family:'Liberation Serif', serif;font-size:10.5px;font-weight:normal;color:#000;white-space:pre;line-height:normal;">29,72</div><div style="position:absolute;left:124.59999999999991px;width:1000px;text-align:center;top:408.39px;font-family:'Liberation Serif', serif;font-size:10.5px;font-weight:normal;color:#000;white-space:pre;line-height:normal;">29,72</div><div style="position:absolute;left:200.8499999999999px;width:1000px;text-align:center;top:367.14px;font-family:'Liberation Serif', serif;font-size:10.5px;font-weight:normal;color:#000;white-space:pre;line-height:normal;">14,55</div><div style="position:absolute;left:200.8499999999999px;width:1000px;text-align:center;top:380.89px;font-family:'Liberation Serif', serif;font-size:10.5px;font-weight:normal;color:#000;white-space:pre;line-height:normal;">15,17</div><div style="position:absolute;left:200.8499999999999px;width:1000px;text-align:center;top:394.64px;font-family:'Liberation Serif', serif;font-size:10.5px;font-weight:normal;color:#000;white-space:pre;line-height:normal;">29,72</div><div style="position:absolute;left:200.8499999999999px;width:1000px;text-align:center;top:408.39px;font-family:'Liberation Serif', serif;font-size:10.5px;font-weight:normal;color:#000;white-space:pre;line-height:normal;">29,72</div><div style="position:absolute;left:277.54999999999995px;width:1000px;text-align:center;top:367.14px;font-family:'Liberation Serif', serif;font-size:10.5px;font-weight:normal;color:#000;white-space:pre;line-height:normal;">14,55</div><div style="position:absolute;left:277.54999999999995px;width:1000px;text-align:center;top:380.89px;font-family:'Liberation Serif', serif;font-size:10.5px;font-weight:normal;color:#000;white-space:pre;line-height:normal;">15,17</div><div style="position:absolute;left:277.54999999999995px;width:1000px;text-align:center;top:394.64px;font-family:'Liberation Serif', serif;font-size:10.5px;font-weight:normal;color:#000;white-space:pre;line-height:normal;">29,72</div><div style="position:absolute;left:277.54999999999995px;width:1000px;text-align:center;top:408.39px;font-family:'Liberation Serif', serif;font-size:10.5px;font-weight:normal;color:#000;white-space:pre;line-height:normal;">29,72</div><div style="position:absolute;left:354.04999999999995px;width:1000px;text-align:center;top:367.14px;font-family:'Liberation Serif', serif;font-size:10.5px;font-weight:normal;color:#000;white-space:pre;line-height:normal;">14,55</div><div style="position:absolute;left:354.04999999999995px;width:1000px;text-align:center;top:380.89px;font-family:'Liberation Serif', serif;font-size:10.5px;font-weight:normal;color:#000;white-space:pre;line-height:normal;">15,17</div><div style="position:absolute;left:354.04999999999995px;width:1000px;text-align:center;top:394.64px;font-family:'Liberation Serif', serif;font-size:10.5px;font-weight:normal;color:#000;white-space:pre;line-height:normal;">29,72</div><div style="position:absolute;left:354.04999999999995px;width:1000px;text-align:center;top:408.39px;font-family:'Liberation Serif', serif;font-size:10.5px;font-weight:normal;color:#000;white-space:pre;line-height:normal;">29,72</div><div style="position:absolute;left:430.9px;width:1000px;text-align:center;top:367.14px;font-family:'Liberation Serif', serif;font-size:10.5px;font-weight:normal;color:#000;white-space:pre;line-height:normal;">14,55</div><div style="position:absolute;left:430.9px;width:1000px;text-align:center;top:380.89px;font-family:'Liberation Serif', serif;font-size:10.5px;font-weight:normal;color:#000;white-space:pre;line-height:normal;">15,17</div><div style="position:absolute;left:430.9px;width:1000px;text-align:center;top:394.64px;font-family:'Liberation Serif', serif;font-size:10.5px;font-weight:normal;color:#000;white-space:pre;line-height:normal;">29,72</div><div style="position:absolute;left:430.9px;width:1000px;text-align:center;top:408.39px;font-family:'Liberation Serif', serif;font-size:10.5px;font-weight:normal;color:#000;white-space:pre;line-height:normal;">29,72</div><div style="position:absolute;left:168.6px;top:408.39px;font-family:'Liberation Serif', serif;font-size:10.5px;font-weight:normal;color:#000;white-space:pre;line-height:normal;">Чистый поток наличности, р.</div><div style="position:absolute;left:-28.600000000000023px;width:1000px;text-align:center;top:408.39px;font-family:'Liberation Serif', serif;font-size:10.5px;font-weight:normal;color:#000;white-space:pre;line-height:normal;">ЧПН</div><div style="position:absolute;left:48.09999999999991px;width:1000px;text-align:center;top:408.39px;font-family:'Liberation Serif', serif;font-size:10.5px;font-weight:normal;color:#000;white-space:pre;line-height:normal;">-79,78</div><div style="position:absolute;left:168.6px;top:422.14px;font-family:'Liberation Serif', serif;font-size:10.5px;font-weight:normal;color:#000;white-space:pre;line-height:normal;">Накопленный чистый поток наличности, р.</div><div style="position:absolute;left:-28.600000000000023px;width:1000px;text-align:center;top:422.14px;font-family:'Liberation Serif', serif;font-size:10.5px;font-weight:normal;color:#000;white-space:pre;line-height:normal;">НЧПН</div><div style="position:absolute;left:48.09999999999991px;width:1000px;text-align:center;top:422.14px;font-family:'Liberation Serif', serif;font-size:10.5px;font-weight:normal;color:#000;white-space:pre;line-height:normal;">-79,78</div><div style="position:absolute;left:124.59999999999991px;width:1000px;text-align:center;top:422.14px;font-family:'Liberation Serif', serif;font-size:10.5px;font-weight:normal;color:#000;white-space:pre;line-height:normal;">-50,07</div><div style="position:absolute;left:200.8499999999999px;width:1000px;text-align:center;top:422.14px;font-family:'Liberation Serif', serif;font-size:10.5px;font-weight:normal;color:#000;white-space:pre;line-height:normal;">-20,35</div><div style="position:absolute;left:277.54999999999995px;width:1000px;text-align:center;top:422.14px;font-family:'Liberation Serif', serif;font-size:10.5px;font-weight:normal;color:#000;white-space:pre;line-height:normal;">9,37</div><div style="position:absolute;left:354.04999999999995px;width:1000px;text-align:center;top:422.14px;font-family:'Liberation Serif', serif;font-size:10.5px;font-weight:normal;color:#000;white-space:pre;line-height:normal;">39,09</div><div style="position:absolute;left:430.9px;width:1000px;text-align:center;top:422.14px;font-family:'Liberation Serif', serif;font-size:10.5px;font-weight:normal;color:#000;white-space:pre;line-height:normal;">68,81</div><div style="position:absolute;left:168.6px;top:435.89px;font-family:'Liberation Serif', serif;font-size:10.5px;font-weight:normal;color:#000;white-space:pre;line-height:normal;">Дисконтированный чистый поток наличности, р.</div><div style="position:absolute;left:-28.600000000000023px;width:1000px;text-align:center;top:435.89px;font-family:'Liberation Serif', serif;font-size:10.5px;font-weight:normal;color:#000;white-space:pre;line-height:normal;">ДЧПН</div><div style="position:absolute;left:48.09999999999991px;width:1000px;text-align:center;top:435.89px;font-family:'Liberation Serif', serif;font-size:10.5px;font-weight:normal;color:#000;white-space:pre;line-height:normal;">-79,78</div><div style="position:absolute;left:124.59999999999991px;width:1000px;text-align:center;top:435.89px;font-family:'Liberation Serif', serif;font-size:10.5px;font-weight:normal;color:#000;white-space:pre;line-height:normal;">25,84</div><div style="position:absolute;left:200.8499999999999px;width:1000px;text-align:center;top:435.89px;font-family:'Liberation Serif', serif;font-size:10.5px;font-weight:normal;color:#000;white-space:pre;line-height:normal;">22,47</div><div style="position:absolute;left:277.54999999999995px;width:1000px;text-align:center;top:435.89px;font-family:'Liberation Serif', serif;font-size:10.5px;font-weight:normal;color:#000;white-space:pre;line-height:normal;">19,54</div><div style="position:absolute;left:354.04999999999995px;width:1000px;text-align:center;top:435.89px;font-family:'Liberation Serif', serif;font-size:10.5px;font-weight:normal;color:#000;white-space:pre;line-height:normal;">16,99</div><div style="position:absolute;left:430.9px;width:1000px;text-align:center;top:435.89px;font-family:'Liberation Serif', serif;font-size:10.5px;font-weight:normal;color:#000;white-space:pre;line-height:normal;">14,78</div><div style="position:absolute;left:168.6px;top:449.64px;font-family:'Liberation Serif', serif;font-size:10.5px;font-weight:bold;color:#000;white-space:pre;line-height:normal;">Чистый дисконтированный доход, р.</div><div style="position:absolute;left:-28.600000000000023px;width:1000px;text-align:center;top:449.64px;font-family:'Liberation Serif', serif;font-size:10.5px;font-weight:normal;color:#000;white-space:pre;line-height:normal;">ЧДД</div><div style="position:absolute;left:-32.5px;width:1000px;text-align:right;top:449.64px;font-family:'Liberation Serif', serif;font-size:10.5px;font-weight:bold;color:#000;white-space:pre;line-height:normal;">19,84</div><div style="position:absolute;left:168.6px;top:463.39px;font-family:'Liberation Serif', serif;font-size:10.5px;font-weight:bold;color:#000;white-space:pre;line-height:normal;">Внутренняя норма доходности, %</div><div style="position:absolute;left:-28.600000000000023px;width:1000px;text-align:center;top:463.39px;font-family:'Liberation Serif', serif;font-size:10.5px;font-weight:normal;color:#000;white-space:pre;line-height:normal;">ВНД</div><div style="position:absolute;left:-32.5px;width:1000px;text-align:right;top:463.39px;font-family:'Liberation Serif', serif;font-size:10.5px;font-weight:bold;color:#000;white-space:pre;line-height:normal;">25,08%</div><div style="position:absolute;left:168.6px;top:477.14px;font-family:'Liberation Serif', serif;font-size:10.5px;font-weight:bold;color:#000;white-space:pre;line-height:normal;">Индекс рентабельности</div><div style="position:absolute;left:-28.600000000000023px;width:1000px;text-align:center;top:477.14px;font-family:'Liberation Serif', serif;font-size:10.5px;font-weight:normal;color:#000;white-space:pre;line-height:normal;">ИР</div><div style="position:absolute;left:-32.5px;width:1000px;text-align:right;top:477.14px;font-family:'Liberation Serif', serif;font-size:10.5px;font-weight:bold;color:#000;white-space:pre;line-height:normal;">1,25</div><div style="position:absolute;left:168.6px;top:490.89px;font-family:'Liberation Serif', serif;font-size:10.5px;font-weight:bold;color:#000;white-space:pre;line-height:normal;">Простой срок окупаемости</div><div style="position:absolute;left:-28.600000000000023px;width:1000px;text-align:center;top:490.89px;font-family:'Liberation Serif', serif;font-size:10.5px;font-weight:normal;color:#000;white-space:pre;line-height:normal;">Ток</div><div style="position:absolute;left:-32.5px;width:1000px;text-align:right;top:490.89px;font-family:'Liberation Serif', serif;font-size:10.5px;font-weight:bold;color:#000;white-space:pre;line-height:normal;">2 года и 9 месяцев</div><div style="position:absolute;left:168.6px;top:504.64px;font-family:'Liberation Serif', serif;font-size:10.5px;font-weight:bold;color:#000;white-space:pre;line-height:normal;">Простой срок окупаемости</div><div style="position:absolute;left:-28.600000000000023px;width:1000px;text-align:center;top:504.64px;font-family:'Liberation Serif', serif;font-size:10.5px;font-weight:normal;color:#000;white-space:pre;line-height:normal;">Ток</div><div style="position:absolute;left:277.54999999999995px;width:1000px;text-align:center;top:504.64px;font-family:'Liberation Serif', serif;font-size:10.5px;font-weight:bold;color:#000;white-space:pre;line-height:normal;">9</div><div style="position:absolute;left:984px;top:146px;width:14px;height:384.25px;background:#e6e6e6;"></div><div style="position:absolute;left:986px;top:148.5px;width:9px;height:9px;background:#fff;border:1px solid #d6d6d6;box-sizing:border-box;"></div><svg style="position:absolute;left:986px;top:148px" width="9" height="9"><polygon points="2.5,5.5 6.5,5.5 4.5,3.3" fill="#555"/></svg><div style="position:absolute;left:986px;top:158px;width:9px;height:363px;background:#d9d9d9;"></div><div style="position:absolute;left:986px;top:158px;width:9px;height:349px;background:#fff;border:1px solid #d6d6d6;box-sizing:border-box;"></div><div style="position:absolute;left:986px;top:522.5px;width:9px;height:9px;background:#fff;border:1px solid #d6d6d6;box-sizing:border-box;"></div><svg style="position:absolute;left:986px;top:522px" width="9" height="9"><polygon points="2.5,3.5 6.5,3.5 4.5,5.7" fill="#555"/></svg><div style="position:absolute;left:150px;top:530.25px;width:848px;height:18.350000000000023px;background:#e6e6e6;border-top:1px solid #c6c6c6;box-sizing:border-box;"></div><svg style="position:absolute;left:160px;top:534px" width="60" height="12"><polygon points="7,6 10,3.5 10,8.5" fill="#444"/><polygon points="27,3.5 30,6 27,8.5" fill="#bbb"/></svg><svg style="position:absolute;left:198px;top:536px" width="16" height="10"><circle cx="4.5" cy="5.5" r="0.9" fill="#444"/><circle cx="7.8" cy="5.5" r="0.9" fill="#444"/><circle cx="11.1" cy="5.5" r="0.9" fill="#444"/></svg><div style="position:absolute;left:215.5px;top:533px;width:1px;height:13px;background:#c8c8c8;"></div><div style="position:absolute;left:-214.8px;width:1000px;text-align:center;top:535.49px;font-family:'Liberation Sans', sans-serif;font-size:8.3px;font-weight:normal;color:#444;white-space:pre;line-height:normal;">Расчет себестоимости и цены</div><div style="position:absolute;left:355.5px;top:530.3px;width:162px;height:17px;background:#fff;border-bottom:2px solid #217346;box-sizing:border-box;"></div><div style="position:absolute;left:-64px;width:1000px;text-align:center;top:535.40px;font-family:'Liberation Sans', sans-serif;font-size:8.4px;font-weight:bold;color:#1f6b41;white-space:pre;line-height:normal;">Интегральные показатели проекта</div><svg style="position:absolute;left:536px;top:533px" width="14" height="14"><circle cx="7" cy="7" r="5" fill="none" stroke="#666" stroke-width="1"/><path d="M7 4.3 V9.7 M4.3 7 H9.7" stroke="#666" stroke-width="1.2"/></svg><div style="position:absolute;left:659px;top:536px;width:1px;height:1px;background:#999;"></div><div style="position:absolute;left:659px;top:539px;width:1px;height:1px;background:#999;"></div><div style="position:absolute;left:659px;top:542px;width:1px;height:1px;background:#999;"></div><div style="position:absolute;left:669px;top:535px;width:314px;height:10.5px;background:#dcdcdc;"></div><div style="position:absolute;left:669px;top:535px;width:10px;height:10.5px;background:#fff;border:1px solid #d0d0d0;box-sizing:border-box;"></div><svg style="position:absolute;left:669px;top:535px" width="10" height="11"><polygon points="3.3,5.3 6,3 6,7.6" fill="#555"/></svg><div style="position:absolute;left:680px;top:535px;width:216.5px;height:10.5px;background:#fff;border:1px solid #d0d0d0;box-sizing:border-box;"></div><div style="position:absolute;left:974px;top:535px;width:9.5px;height:10.5px;background:#fff;border:1px solid #d0d0d0;box-sizing:border-box;"></div><svg style="position:absolute;left:974px;top:535px" width="10" height="11"><polygon points="6.3,5.3 3.6,3 3.6,7.6" fill="#555"/></svg><div style="position:absolute;left:150px;top:548.6px;width:848px;height:14.399999999999977px;background:#f0f0f0;"></div><div style="position:absolute;left:154.5px;top:552.12px;font-family:'Liberation Sans', sans-serif;font-size:7.6px;font-weight:normal;color:#444;white-space:pre;line-height:normal;">Готово</div><div style="position:absolute;left:798px;top:549px;width:24px;height:14px;background:#d2d2d2;"></div><svg style="position:absolute;left:798px;top:549px" width="200" height="15"><g fill="none" stroke="#666" stroke-width="0.9"><rect x="7.5" y="3.5" width="9" height="8"/><path d="M7.5 6.2 H16.5 M7.5 8.9 H16.5 M10.5 3.5 V11.5 M13.5 3.5 V11.5"/><rect x="32.5" y="3.5" width="9" height="8"/><rect x="35" y="5.5" width="4" height="4"/><path d="M59.5 3.5 V11.5 H68.5 V3.5 M62.5 3.5 V7.5 M65.5 3.5 V7.5"/></g><path d="M78 7.5 H82" stroke="#444" stroke-width="1.2"/><path d="M84 7.5 H149" stroke="#aaa" stroke-width="1"/><rect x="115.5" y="3.5" width="2" height="8" fill="#555"/><path d="M151 7.5 H157 M154 4.5 V10.5" stroke="#444" stroke-width="1.2"/></svg><div style="position:absolute;left:474.5px;width:1000px;text-align:center;top:552.30px;font-family:'Liberation Sans', sans-serif;font-size:7.4px;font-weight:normal;color:#444;white-space:pre;line-height:normal;">100 %</div><svg style="position:absolute;left:0;top:0" width="1024" height="146"><rect x="155.5" y="21.7" width="8.3" height="9" fill="none" stroke="#fff" stroke-width="1.1"/><rect x="157.5" y="21.7" width="4.3" height="2.6" fill="#fff"/><rect x="157" y="27" width="5.3" height="3.5" fill="#fff"/><rect x="158.4" y="28.2" width="1" height="2.4" fill="#217346"/><path d="M175 23.5 L173.8 26 L176.5 26.3 M174.2 25.8 C176 23.5 181.5 23 182.5 26.5 C183 29 180 30 178.5 29.5" stroke="#5f9c79" stroke-width="1.2" fill="none"/><circle cx="189" cy="25.7" r="0.8" fill="#5f9c79"/><path d="M208 23.5 L209.2 26 L206.5 26.3 M208.8 25.8 C207 23.5 201.5 23 200.5 26.5 C200 29 203 30 204.5 29.5" stroke="#5f9c79" stroke-width="1.2" fill="none"/><circle cx="214.5" cy="25.7" r="0.8" fill="#5f9c79"/><rect x="225.3" y="23.6" width="4" height="0.9" fill="#fff"/><polygon points="225.3,25.5 229.3,25.5 227.3,28" fill="#fff"/><rect x="926.2" y="23.3" width="8.5" height="6.3" fill="none" stroke="#fff" stroke-width="1"/><path d="M928.5 27.3 L930.4 25.3 L932.3 27.3 M930.4 25.3 V28.8" stroke="#fff" stroke-width="0.9" fill="none"/><rect x="926.2" y="23.3" width="8.5" height="1.3" fill="#fff"/><rect x="946" y="26.6" width="6.5" height="1" fill="#fff"/><rect x="965.5" y="23.5" width="6.5" height="6.5" fill="none" stroke="#fff" stroke-width="1"/><rect x="965.5" y="23.5" width="6.5" height="1.5" fill="#fff"/><path d="M985 23 L991.5 29.5 M991.5 23 L985 29.5" stroke="#fff" stroke-width="1.2"/><circle cx="923.8" cy="45.2" r="2.4" fill="none" stroke="#fff" stroke-width="0.9"/><path d="M919.6 53 C 919.8 49.5 921.5 48 923.8 48 C 925.3 48 926.4 48.6 927 49.5" stroke="#fff" stroke-width="0.9" fill="none"/><path d="M927.6 50 V54 M925.6 52 H929.6" stroke="#fff" stroke-width="0.9"/><rect x="162" y="63.2" width="15.6" height="16.4" fill="#e8c26a"/><path d="M165.8 65.2 H175 V63.6 H172.4 V61.6 H168.4 V63.6 H165.8 Z" fill="#505050"/><path d="M171.2 68 H177.8 L180.4 70.6 V80 H171.2 Z" fill="#fff" stroke="#7a7a7a" stroke-width="0.9"/><path d="M177.8 68 V70.6 H180.4" fill="none" stroke="#7a7a7a" stroke-width="0.8"/><text x="170" y="89.6" font-family="Liberation Sans" font-size="7.3" fill="#333" text-anchor="middle" font-weight="normal">Вставить</text><polygon points="168.39999999999998,96.6 172.0,96.6 170.2,98.22" fill="#555"/><path d="M192 60 L197.5 66.5 M198 60 L192.5 66.5" stroke="#444" stroke-width="1.1"/><circle cx="192" cy="67.5" r="1.9" fill="none" stroke="#4e7fc0" stroke-width="1.1"/><circle cx="198" cy="67.5" r="1.9" fill="none" stroke="#4e7fc0" stroke-width="1.1"/><path d="M189.8 75 H194.5 L196.2 76.7 V82 H189.8 Z" fill="#e8eef7" stroke="#777" stroke-width="0.8"/><rect x="191" y="77.5" width="2.5" height="2.4" fill="#4e7fc0"/><path d="M194 78 H198.3 L200 79.7 V84.5 H194 Z" fill="#e8eef7" stroke="#777" stroke-width="0.8"/><rect x="195.3" y="80.5" width="2.5" height="2.4" fill="#4e7fc0"/><polygon points="203.9,79.3 207.1,79.3 205.5,80.74" fill="#555"/><path d="M191 96 L195.5 91.5 L198 94 L193.5 98.5 Z" fill="#e2c178"/><path d="M196 91 L199.6 88.8 L200.4 89.6 L198.2 93.2 Z" fill="#555"/><text x="177" y="113" font-family="Liberation Sans" font-size="7.4" fill="#555" text-anchor="middle" font-weight="normal">Буфер обмена</text><path d="M206.5 113 V109 H210.5" stroke="#777" stroke-width="0.8" fill="none"/><path d="M208.0 111.5 L210.5 114 M208.5 114 H210.5 V112" stroke="#777" stroke-width="0.8" fill="none"/><line x1="214.8" y1="58" x2="214.8" y2="113" stroke="#d6d6d6" stroke-width="1"/><rect x="219" y="64" width="71" height="13" fill="#fff" stroke="#d4d4d4" stroke-width="0.9"/><text x="221" y="73.8" font-family="Liberation Sans" font-size="7.6" fill="#333" text-anchor="start" font-weight="normal">Times New Roma</text><polygon points="283.9,69.7 287.1,69.7 285.5,71.14" fill="#666"/><rect x="290" y="64" width="28" height="13" fill="#fff" stroke="#d4d4d4" stroke-width="0.9"/><text x="293" y="73.8" font-family="Liberation Sans" font-size="7.6" fill="#333" text-anchor="start" font-weight="normal">12</text><polygon points="311.9,69.7 315.1,69.7 313.5,71.14" fill="#666"/><text x="323" y="75" font-family="Liberation Sans" font-size="9.5" fill="#444" text-anchor="start" font-weight="normal">A</text><polygon points="330.20000000000005,64.2 333.0,64.2 331.6,65.46000000000001" fill="#444"/><text x="337.5" y="75" font-family="Liberation Sans" font-size="8" fill="#444" text-anchor="start" font-weight="normal">A</text><polygon points="343.8,63.8 346.6,63.8 345.2,65.8" fill="#444"/><text x="221" y="93.5" font-family="Liberation Sans" font-size="7.6" fill="#333" text-anchor="start" font-weight="bold">Ж</text><text x="236" y="93.5" font-family="Liberation Sans" font-size="7.8" font-style="italic" fill="#333">К</text><path d="M238.3 87.8 L236 93.3" stroke="#f3f3f3" stroke-width="0"/><text x="251.5" y="93" font-family="Liberation Sans" font-size="7.6" fill="#333" text-anchor="start" font-weight="normal">Ч</text><rect x="251" y="94.5" width="6" height="0.9" fill="#333"/><polygon points="263.7,89.6 266.90000000000003,89.6 265.3,91.03999999999999" fill="#666"/><line x1="271.5" y1="84" x2="271.5" y2="99" stroke="#d6d6d6" stroke-width="1"/><rect x="277.5" y="86.5" width="8" height="8" fill="none" stroke="#999" stroke-width="0.8" stroke-dasharray="1,0.8"/><path d="M281.5 86.5 V94.5 M277.5 90.5 H285.5" stroke="#aaa" stroke-width="0.7" stroke-dasharray="1,0.8"/><polygon points="290.4,89.6 293.6,89.6 292,91.03999999999999" fill="#666"/><line x1="300.5" y1="84" x2="300.5" y2="99" stroke="#d6d6d6" stroke-width="1"/><path d="M306.5 89.5 L310 86 L314.5 90.5 L311 94 Z" fill="#fff" stroke="#555" stroke-width="0.8"/><path d="M314.5 90.5 C 316 91.5 316 93 315.5 93.5" stroke="#4e7fc0" stroke-width="1" fill="none"/><rect x="305" y="93.8" width="11" height="2.2" fill="#f0e000"/><polygon points="319.7,89.6 322.90000000000003,89.6 321.3,91.03999999999999" fill="#666"/><text x="328.3" y="92.5" font-family="Liberation Sans" font-size="8.2" fill="#444" text-anchor="start" font-weight="normal">A</text><rect x="327" y="93.8" width="11" height="2.2" fill="#e00000"/><polygon points="341.4,89.6 344.6,89.6 343,91.03999999999999" fill="#666"/><text x="277" y="113" font-family="Liberation Sans" font-size="7.4" fill="#555" text-anchor="middle" font-weight="normal">Шрифт</text><path d="M344.5 113 V109 H348.5" stroke="#777" stroke-width="0.8" fill="none"/><path d="M346.0 111.5 L348.5 114 M346.5 114 H348.5 V112" stroke="#777" stroke-width="0.8" fill="none"/><line x1="350.3" y1="58" x2="350.3" y2="113" stroke="#d6d6d6" stroke-width="1"/><line x1="355.5" y1="64.5" x2="365.0" y2="64.5" stroke="#666" stroke-width="0.9"/><line x1="355.5" y1="66.5" x2="365.0" y2="66.5" stroke="#666" stroke-width="0.9"/><line x1="355.5" y1="68.5" x2="365.0" y2="68.5" stroke="#666" stroke-width="0.9"/><line x1="370.5" y1="66.5" x2="380.0" y2="66.5" stroke="#666" stroke-width="0.9"/><line x1="370.5" y1="68.5" x2="380.0" y2="68.5" stroke="#666" stroke-width="0.9"/><line x1="370.5" y1="70.5" x2="380.0" y2="70.5" stroke="#666" stroke-width="0.9"/><rect x="382" y="62.6" width="14" height="14.7" fill="#c8c8c8"/><line x1="384.5" y1="70.5" x2="394.0" y2="70.5" stroke="#666" stroke-width="0.9"/><line x1="384.5" y1="72.5" x2="394.0" y2="72.5" stroke="#666" stroke-width="0.9"/><line x1="384.5" y1="74.5" x2="394.0" y2="74.5" stroke="#666" stroke-width="0.9"/><path d="M401 68 L406 63 M402 72 L410 64" stroke="#555" stroke-width="1"/><text x="400.5" y="71" font-family="Liberation Sans" font-size="6" fill="#555" transform="rotate(-45 403 68)">ab</text><polygon points="413.7,69.3 416.90000000000003,69.3 415.3,70.74" fill="#666"/><rect x="434.5" y="63.5" width="11" height="3" fill="none" stroke="#777" stroke-width="0.8"/><path d="M434.5 68.5 H445 C447 68.5 447 72 445 72 H441" stroke="#4e7fc0" stroke-width="0.9" fill="none"/><rect x="434.5" y="70.5" width="5" height="4.5" fill="none" stroke="#777" stroke-width="0.8"/><line x1="355.5" y1="86.5" x2="365" y2="86.5" stroke="#666" stroke-width="0.9"/><line x1="355.5" y1="88.5" x2="361.5" y2="88.5" stroke="#666" stroke-width="0.9"/><line x1="355.5" y1="90.5" x2="365" y2="90.5" stroke="#666" stroke-width="0.9"/><line x1="355.5" y1="92.5" x2="361.5" y2="92.5" stroke="#666" stroke-width="0.9"/><rect x="368" y="82.5" width="14" height="15.3" fill="#c8c8c8"/><line x1="370.5" y1="86.5" x2="380" y2="86.5" stroke="#666" stroke-width="0.9"/><line x1="372.5" y1="88.5" x2="378" y2="88.5" stroke="#666" stroke-width="0.9"/><line x1="370.5" y1="90.5" x2="380" y2="90.5" stroke="#666" stroke-width="0.9"/><line x1="372.5" y1="92.5" x2="378" y2="92.5" stroke="#666" stroke-width="0.9"/><line x1="384.5" y1="86.5" x2="394" y2="86.5" stroke="#666" stroke-width="0.9"/><line x1="388" y1="88.5" x2="394" y2="88.5" stroke="#666" stroke-width="0.9"/><line x1="384.5" y1="90.5" x2="394" y2="90.5" stroke="#666" stroke-width="0.9"/><line x1="388" y1="92.5" x2="394" y2="92.5" stroke="#666" stroke-width="0.9"/><line x1="400.5" y1="86.5" x2="411.5" y2="86.5" stroke="#777" stroke-width="0.9"/><line x1="400.5" y1="94.5" x2="411.5" y2="94.5" stroke="#777" stroke-width="0.9"/><line x1="405" y1="88.5" x2="411.5" y2="88.5" stroke="#777" stroke-width="0.9"/><line x1="405" y1="90.5" x2="411.5" y2="90.5" stroke="#777" stroke-width="0.9"/><line x1="405" y1="92.5" x2="411.5" y2="92.5" stroke="#777" stroke-width="0.9"/><path d="M404 90.5 H400.5 M402.2 88.8 L400.5 90.5 L402.2 92.2" stroke="#2e6ab1" stroke-width="1" fill="none"/><line x1="414.5" y1="86.5" x2="425.5" y2="86.5" stroke="#777" stroke-width="0.9"/><line x1="414.5" y1="94.5" x2="425.5" y2="94.5" stroke="#777" stroke-width="0.9"/><line x1="419" y1="88.5" x2="425.5" y2="88.5" stroke="#777" stroke-width="0.9"/><line x1="419" y1="90.5" x2="425.5" y2="90.5" stroke="#777" stroke-width="0.9"/><line x1="419" y1="92.5" x2="425.5" y2="92.5" stroke="#777" stroke-width="0.9"/><path d="M414.5 90.5 H418 M416.3 88.8 L418 90.5 L416.3 92.2" stroke="#2e6ab1" stroke-width="1" fill="none"/><rect x="434.5" y="85.5" width="10.5" height="9.5" fill="none" stroke="#777" stroke-width="0.8"/><path d="M434.5 88.5 H445 M434.5 92 H445 M439.7 85.5 V88.5 M439.7 92 V95" stroke="#777" stroke-width="0.8"/><polygon points="449.4,89.6 452.6,89.6 451,91.03999999999999" fill="#666"/><text x="398" y="113" font-family="Liberation Sans" font-size="7.4" fill="#555" text-anchor="middle" font-weight="normal">Выравнивание</text><path d="M454 113 V109 H458" stroke="#777" stroke-width="0.8" fill="none"/><path d="M455.5 111.5 L458 114 M456 114 H458 V112" stroke="#777" stroke-width="0.8" fill="none"/><line x1="459" y1="58" x2="459" y2="113" stroke="#d6d6d6" stroke-width="1"/><rect x="462" y="63.5" width="85.3" height="13.8" fill="#fff" stroke="#d4d4d4" stroke-width="0.9"/><text x="464" y="73.8" font-family="Liberation Sans" font-size="7.6" fill="#333" text-anchor="start" font-weight="normal">Общий</text><polygon points="541.1999999999999,69.7 544.4,69.7 542.8,71.14" fill="#666"/><rect x="464" y="85" width="10" height="6" fill="#d9e6f5" stroke="#2e6ab1" stroke-width="0.9"/><circle cx="469" cy="88" r="1.5" fill="none" stroke="#2e6ab1" stroke-width="0.8"/><circle cx="468" cy="93.5" r="2" fill="#e8c26a"/><polygon points="478.7,89.6 481.90000000000003,89.6 480.3,91.03999999999999" fill="#666"/><text x="487.5" y="94" font-family="Liberation Sans" font-size="8.8" fill="#333" text-anchor="start" font-weight="bold">%</text><text x="500.5" y="93" font-family="Liberation Sans" font-size="6.2" fill="#444" text-anchor="start" font-weight="bold">000</text><line x1="516" y1="84" x2="516" y2="99" stroke="#d6d6d6" stroke-width="1"/><text x="521" y="93.5" font-family="Liberation Sans" font-size="5" fill="#444" text-anchor="start" font-weight="normal">.0</text><text x="524.5" y="94.5" font-family="Liberation Sans" font-size="5" fill="#444" text-anchor="start" font-weight="normal">00</text><path d="M521 87.5 H525 M522.5 86 L521 87.5 L522.5 89" stroke="#2e6ab1" stroke-width="0.8" fill="none"/><text x="535" y="89.5" font-family="Liberation Sans" font-size="5" fill="#444" text-anchor="start" font-weight="normal">.00</text><text x="538.5" y="95" font-family="Liberation Sans" font-size="5" fill="#444" text-anchor="start" font-weight="normal">0</text><path d="M535 93 H539 M537.5 91.5 L539 93 L537.5 94.5" stroke="#2e6ab1" stroke-width="0.8" fill="none"/><text x="490" y="113" font-family="Liberation Sans" font-size="7.4" fill="#555" text-anchor="middle" font-weight="normal">Число</text><path d="M544.5 113 V109 H548.5" stroke="#777" stroke-width="0.8" fill="none"/><path d="M546.0 111.5 L548.5 114 M546.5 114 H548.5 V112" stroke="#777" stroke-width="0.8" fill="none"/><line x1="551.5" y1="58" x2="551.5" y2="113" stroke="#d6d6d6" stroke-width="1"/><rect x="579.5" y="60.5" width="17" height="18" fill="#fff" stroke="#888" stroke-width="0.8"/><line x1="579.5" y1="65" x2="596.5" y2="65" stroke="#aaa" stroke-width="0.7"/><line x1="579.5" y1="69.5" x2="596.5" y2="69.5" stroke="#aaa" stroke-width="0.7"/><line x1="579.5" y1="74" x2="596.5" y2="74" stroke="#aaa" stroke-width="0.7"/><line x1="585" y1="60.5" x2="585" y2="78.5" stroke="#aaa" stroke-width="0.7"/><line x1="590.5" y1="60.5" x2="590.5" y2="78.5" stroke="#aaa" stroke-width="0.7"/><rect x="585" y="61" width="5" height="4" fill="#d9534f"/><rect x="585" y="65.3" width="8" height="4" fill="#4e7fc0"/><rect x="585" y="69.8" width="4" height="4" fill="#d9534f"/><rect x="585" y="74.2" width="6" height="4" fill="#4e7fc0"/><rect x="588.5" y="72" width="11" height="8.5" fill="#fff" stroke="#555" stroke-width="0.9"/><text x="591" y="79" font-family="Liberation Sans" font-size="7" fill="#333">≠</text><text x="589" y="90.5" font-family="Liberation Sans" font-size="7.6" fill="#333" text-anchor="middle" font-weight="normal">Условное</text><text x="585.5" y="101.5" font-family="Liberation Sans" font-size="7.6" fill="#333" text-anchor="middle" font-weight="normal">форматирование</text><polygon points="619.0,98.3 622.0,98.3 620.5,99.64999999999999" fill="#555"/><rect x="646.5" y="61.5" width="16" height="15" fill="#fff" stroke="#888" stroke-width="0.8"/><rect x="646.5" y="61.5" width="16" height="3" fill="#9ab7dc"/><line x1="646.5" y1="67.5" x2="662.5" y2="67.5" stroke="#aaa" stroke-width="0.7"/><line x1="646.5" y1="70.5" x2="662.5" y2="70.5" stroke="#aaa" stroke-width="0.7"/><line x1="646.5" y1="73.5" x2="662.5" y2="73.5" stroke="#aaa" stroke-width="0.7"/><rect x="650" y="65" width="9" height="9" fill="#c4d6ee" opacity="0.9"/><path d="M659 78 L666 70.5 L667.5 72 L661 79 Z" fill="#666"/><path d="M655 80.5 C 656 77 658 76.5 660.5 78.5 C 659 80.5 657 81 655 80.5 Z" fill="#2e6ab1"/><text x="655" y="90.5" font-family="Liberation Sans" font-size="7.6" fill="#333" text-anchor="middle" font-weight="normal">Форматировать</text><text x="652" y="101.5" font-family="Liberation Sans" font-size="7.6" fill="#333" text-anchor="middle" font-weight="normal">как таблицу</text><polygon points="676.3,98.3 679.3,98.3 677.8,99.64999999999999" fill="#555"/><rect x="690.5" y="61" width="17" height="14" fill="#fff" stroke="#888" stroke-width="0.8"/><rect x="693.5" y="65.5" width="11" height="6" fill="#b5cbe8"/><line x1="690.5" y1="64.5" x2="707.5" y2="64.5" stroke="#aaa" stroke-width="0.7"/><path d="M703 78 L710 70.5 L711.5 72 L705 79 Z" fill="#666"/><path d="M699 80.5 C 700 77 702 76.5 704.5 78.5 C 703 80.5 701 81 699 80.5 Z" fill="#2e6ab1"/><text x="699.5" y="90.5" font-family="Liberation Sans" font-size="7.6" fill="#333" text-anchor="middle" font-weight="normal">Стили</text><text x="696.5" y="101.5" font-family="Liberation Sans" font-size="7.6" fill="#333" text-anchor="middle" font-weight="normal">ячеек</text><polygon points="709.0,98.3 712.0,98.3 710.5,99.64999999999999" fill="#555"/><text x="633" y="113" font-family="Liberation Sans" font-size="7.4" fill="#555" text-anchor="middle" font-weight="normal">Стили</text><line x1="716.6" y1="58" x2="716.6" y2="113" stroke="#d6d6d6" stroke-width="1"/><rect x="721.5" y="60.5" width="9" height="9" fill="#fff" stroke="#888" stroke-width="0.7"/><path d="M721.5 63.5 H730.5 M721.5 66.5 H730.5 M724.5 60.5 V69.5 M727.5 60.5 V69.5" stroke="#aaa" stroke-width="0.6"/><rect x="725" y="63.5" width="7" height="3" fill="#4e7fc0"/><text x="734" y="67.6" font-family="Liberation Sans" font-size="7.6" fill="#333" text-anchor="start" font-weight="normal">Вставить</text><polygon points="771.8,64.5 774.8,64.5 773.3,65.85" fill="#666"/><rect x="721.5" y="75.5" width="9" height="9" fill="#fff" stroke="#888" stroke-width="0.7"/><path d="M721.5 78.5 H730.5 M721.5 81.5 H730.5 M724.5 75.5 V84.5 M727.5 75.5 V84.5" stroke="#aaa" stroke-width="0.6"/><path d="M727 77 L732 82 M732 77 L727 82" stroke="#e03a3a" stroke-width="1.1"/><text x="734" y="82.6" font-family="Liberation Sans" font-size="7.6" fill="#333" text-anchor="start" font-weight="normal">Удалить</text><polygon points="770.0,79.5 773.0,79.5 771.5,80.85" fill="#666"/><rect x="721.5" y="90" width="10" height="9" fill="#fff" stroke="#777" stroke-width="0.8"/><rect x="721.5" y="90" width="10" height="2" fill="#777"/><rect x="724" y="93.5" width="5" height="3" fill="#2e6ab1"/><text x="734" y="97.5" font-family="Liberation Sans" font-size="7.6" fill="#333" text-anchor="start" font-weight="normal">Формат</text><polygon points="763.8,94.5 766.8,94.5 765.3,95.85" fill="#666"/><text x="748" y="113" font-family="Liberation Sans" font-size="7.4" fill="#555" text-anchor="middle" font-weight="normal">Ячейки</text><line x1="781.8" y1="58" x2="781.8" y2="113" stroke="#d6d6d6" stroke-width="1"/><text x="786" y="70.5" font-family="Liberation Sans" font-size="11.5" fill="#333" text-anchor="start" font-weight="bold">Σ</text><polygon points="800.1,65 803.9,65 802,66.71" fill="#666"/><rect x="787.5" y="75.5" width="9" height="9" fill="#fff" stroke="#777" stroke-width="0.8"/><rect x="787.5" y="75.5" width="9" height="1.8" fill="#777"/><path d="M792 78 V82.5 M790 80.5 L792 82.5 L794 80.5" stroke="#2e6ab1" stroke-width="1" fill="none"/><polygon points="800.1,79.7 803.9,79.7 802,81.41" fill="#666"/><path d="M787.5 95 L792.5 90 L796.5 93.5 L791.5 98.5 Z" fill="#f2a0b0" stroke="#d04060" stroke-width="0.6"/><path d="M789 99 H797" stroke="#d04060" stroke-width="0.6"/><polygon points="800.1,94.2 803.9,94.2 802,95.91" fill="#666"/><text x="820.5" y="68.5" font-family="Liberation Sans" font-size="8.2" fill="#2e6ab1" text-anchor="start" font-weight="bold">А</text><text x="820.5" y="76.2" font-family="Liberation Sans" font-size="8.2" fill="#8e4ca0" text-anchor="start" font-weight="bold">Я</text><path d="M827 64.5 H840 L835.2 70.2 V75.5 L831.8 73.5 V70.2 Z" fill="#999"/><text x="830" y="90.5" font-family="Liberation Sans" font-size="7.6" fill="#333" text-anchor="middle" font-weight="normal">Сортировка</text><text x="828" y="101.5" font-family="Liberation Sans" font-size="7.6" fill="#333" text-anchor="middle" font-weight="normal">и фильтр</text><polygon points="845.3,98.3 848.3,98.3 846.8,99.64999999999999" fill="#555"/><circle cx="878.8" cy="66.5" r="5.8" fill="#fff" stroke="#2e6ab1" stroke-width="1.9"/><path d="M874.7 70.6 L868.5 77" stroke="#2e6ab1" stroke-width="2.6" stroke-linecap="round"/><text x="875.5" y="90.5" font-family="Liberation Sans" font-size="7.6" fill="#333" text-anchor="middle" font-weight="normal">Найти и</text><text x="873" y="101.5" font-family="Liberation Sans" font-size="7.6" fill="#333" text-anchor="middle" font-weight="normal">выделить</text><polygon points="890.3,98.3 893.3,98.3 891.8,99.64999999999999" fill="#555"/><text x="840" y="113" font-family="Liberation Sans" font-size="7.4" fill="#555" text-anchor="middle" font-weight="normal">Редактирование</text><line x1="899" y1="58" x2="899" y2="113" stroke="#d6d6d6" stroke-width="1"/><path d="M984.5 112 L987.5 109 L990.5 112" stroke="#555" stroke-width="1.1" fill="none"/></svg></div></body></html>
